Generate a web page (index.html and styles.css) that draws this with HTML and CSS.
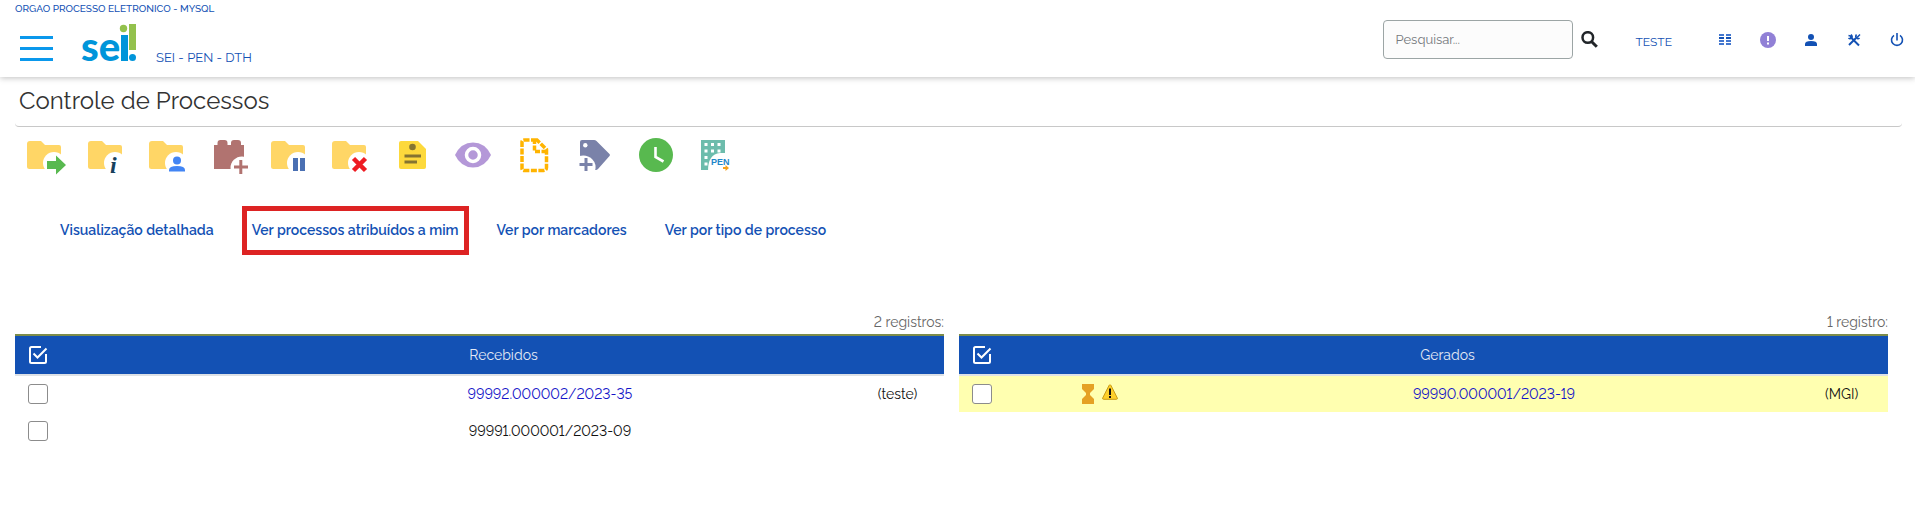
FILE: index.html
```html
<!DOCTYPE html>
<html lang="pt-BR">
<head>
<meta charset="utf-8">
<title>SEI - Controle de Processos</title>
<link rel="stylesheet" href="styles.css">
</head>
<body>
<svg class="defs" aria-hidden="true">
  <defs>
    <g id="folder">
      <path d="M4 6h11l4 4h14q2 0 2 2v20q0 2-2 2H3.500q-2.500 0-2.500-2.500V9q0-3 3-3z" fill="#ffd666"/>
      <circle cx="28" cy="28" r="11" fill="#fff"/>
      <path d="M30 34h7v5h-7z" fill="#fff"/>
    </g>
    <g id="check-all" fill="none" stroke="#fff" stroke-width="2">
      <path d="M13 2H3.500Q2 2 2 3.500v13Q2 18 3.500 18h13q1.500 0 1.500-1.500V9"/>
      <path d="M5.500 8.500l4 4L18.500 3.500"/>
    </g>
  </defs>
</svg>

<header class="topbar">
  <div class="brand">
    <div class="org">ORGAO PROCESSO ELETRONICO - MYSQL</div>
    <div class="brand-row">
      <button class="icon-button menu" type="button" aria-label="Menu">
        <svg width="33" height="26" viewBox="0 0 33 26" fill="#0a98ec"><path d="M0 0h33v3H0zM0 11h33v3H0zM0 22h33v3H0z"/></svg>
      </button>
      <svg class="logo" width="56" height="38" viewBox="0 0 56 38" role="img" aria-label="sei!">
        <text class="logo-text" x="0" y="37">se</text>
        <circle cx="42.500" cy="4.500" r="3.700" fill="#93c14d"/>
        <path d="M40 11h7v26h-7z" fill="#0095da"/>
        <path d="M48 0h7v26h-7z" fill="#93c14d"/>
        <circle cx="51.500" cy="33.500" r="3.500" fill="#0095da"/>
      </svg>
      <span class="unit">SEI - PEN - DTH</span>
    </div>
  </div>
  <div class="tools">
    <form class="search">
      <input class="search-input" type="text" placeholder="Pesquisar..." aria-label="Pesquisar">
      <button class="icon-button" type="button" aria-label="Buscar">
        <svg width="17" height="17" viewBox="0 0 17 17" fill="none" stroke="#212529"><circle cx="6.800" cy="6.500" r="5.300" stroke-width="2.500"/><path d="M10.500 10.500l5.300 5.300" stroke-width="3"/></svg>
      </button>
    </form>
    <a class="user" href="#">TESTE</a>
    <nav class="actions" aria-label="Ações">
      <button class="icon-button" type="button" aria-label="Painel">
        <svg width="16" height="16" viewBox="0 0 16 16" fill="#4377cf"><path d="M2 2h5v2H2zM9 2h5v2H9zM2 8h5v2H2zM9 8h5v2H9zM2 11h5v2H2zM9 11h5v2H9z"/><path d="M2 5h5v2H2zM9 5h5v2H9z" fill="#1351b4"/></svg>
      </button>
      <button class="icon-button" type="button" aria-label="Avisos">
        <svg width="16" height="16" viewBox="0 0 16 16"><circle cx="8" cy="8" r="8" fill="#9180d6"/><path d="M7 4h2v5H7zM7 10.500h2v2H7z" fill="#fff"/></svg>
      </button>
      <button class="icon-button" type="button" aria-label="Usuário">
        <svg width="16" height="16" viewBox="0 0 16 16" fill="#1351b4"><circle cx="8" cy="5" r="3"/><path d="M2 14v-2q0-3 6-3t6 3v2z"/></svg>
      </button>
      <button class="icon-button" type="button" aria-label="Configurações">
        <svg width="16" height="16" viewBox="0 0 16 16" fill="none" stroke="#1351b4"><path d="M4.500 5l8.500 8.500" stroke-width="2"/><path d="M3 13L10 6" stroke-width="2"/><path d="M2.500 3.500l2 .500.500 2M5 2.500q2 2 .500 3.500T2.500 6" stroke-width="1.500"/><path d="M10.500 2.500q-1.500 2 0 3.500t3 0M11 5.500l3-3" stroke-width="1.500"/></svg>
      </button>
      <button class="icon-button" type="button" aria-label="Sair">
        <svg width="16" height="16" viewBox="0 0 16 16" fill="none" stroke="#1351b4" stroke-width="1.600"><path d="M8 1v7.500M5 3.300a5.500 5.500 0 1 0 6 0"/></svg>
      </button>
    </nav>
  </div>
</header>

<main class="content">
  <h1 class="title">Controle de Processos</h1>

  <div class="toolbar">
    <button class="icon-button" type="button" aria-label="Enviar processo"><svg width="40" height="40" viewBox="0 0 40 40"><use href="#folder"/><path d="M21 26h9v-5.500l10 9.500-10 9.500V34h-9z" fill="#58b94f"/></svg></button>
    <button class="icon-button" type="button" aria-label="Atualizar andamento"><svg class="info-icon" width="40" height="40" viewBox="0 0 40 40"><use href="#folder"/><text class="info-glyph" x="23" y="38">i</text></svg></button>
    <button class="icon-button" type="button" aria-label="Atribuição"><svg width="40" height="40" viewBox="0 0 40 40"><use href="#folder"/><g fill="#4285f4"><circle cx="29" cy="25.500" r="4"/><path d="M21 36.500v-1.500q0-4 8-4t8 4v1.500z"/></g></svg></button>
    <button class="icon-button" type="button" aria-label="Incluir em bloco"><svg width="40" height="40" viewBox="0 0 40 40"><path d="M5 10h3.500V8q0-3 3-3h4q3 0 3 3v2H22V8q0-3 3-3h4q3 0 3 3v2h3v24H5z" fill="#b17370"/><circle cx="33" cy="33" r="11.500" fill="#fff"/><path d="M30.300 25h3v5.500h5.700v3h-5.700v5.500h-3v-5.500H25v-3h5.300z" fill="#b17370"/></svg></button>
    <button class="icon-button" type="button" aria-label="Sobrestar"><svg width="40" height="40" viewBox="0 0 40 40"><use href="#folder"/><path d="M23 23h5v13h-5zM30 23h5v13h-5z" fill="#4a70b3"/></svg></button>
    <button class="icon-button" type="button" aria-label="Concluir"><svg width="40" height="40" viewBox="0 0 40 40"><use href="#folder"/><path d="M22.500 23.500l12 12M34.500 23.500l-12 12" stroke="#ee1c23" stroke-width="4.500"/></svg></button>
    <button class="icon-button" type="button" aria-label="Anotações"><svg width="40" height="40" viewBox="0 0 40 40"><path d="M9 6h17l8 8v18q0 2-2 2H9q-2 0-2-2V8q0-2 2-2z" fill="#fdd93c"/><g fill="#857430"><circle cx="20.500" cy="12" r="3.300"/><path d="M12.500 19.500H29v3H12.500zM12.500 25.500H25v3H12.500z"/></g></svg></button>
    <button class="icon-button" type="button" aria-label="Acompanhamento"><svg width="40" height="40" viewBox="0 0 40 40"><path d="M2 20Q8 7.500 20 7.500T38 20Q32 32.500 20 32.500T2 20z" fill="#b498d8"/><circle cx="20" cy="20" r="6.500" fill="#b498d8" stroke="#fff" stroke-width="3.500"/></svg></button>
    <button class="icon-button" type="button" aria-label="Incluir documento"><svg width="40" height="40" viewBox="0 0 40 40" fill="none" stroke="#ffb400" stroke-width="3.500"><path d="M23 5H10.500Q8 5 8 7v26.500Q8 35.500 10.500 35.500h19q3 0 3-3V14.500z" stroke-dasharray="6 1.500"/><path d="M20.500 4v12.500H33" stroke-dasharray="5 1.500"/></svg></button>
    <button class="icon-button" type="button" aria-label="Marcadores"><svg width="40" height="40" viewBox="0 0 40 40"><path d="M7 5h12q1.500 0 2.500 1l13 13q1 1 0 2L23 34q-1 1-2 1H5V7q0-2 2-2z" fill="#7a82a9"/><circle cx="10.300" cy="10.300" r="2.200" fill="#fff"/><path d="M4 21q8-2 13 3t3 12H4z" fill="#fff"/><path d="M9.500 23h3v5h5v3h-5v5h-3v-5h-5v-3h5z" fill="#7a82a9"/></svg></button>
    <button class="icon-button" type="button" aria-label="Prazos"><svg width="40" height="40" viewBox="0 0 40 40"><circle cx="20" cy="20" r="17" fill="#58b94f"/><path d="M19.500 12v10l8 4.500" fill="none" stroke="#fff" stroke-width="2.600"/></svg></button>
    <button class="icon-button" type="button" aria-label="Tramita PEN"><svg width="40" height="40" viewBox="0 0 40 40"><path d="M4 5h24v30H4z" fill="#6dbcac"/><path d="M7.500 8h3v3h-3zM14 8h3v3h-3zM20.500 8h3v3h-3zM7.500 14.500h3v3h-3zM14 14.500h3v3h-3zM20.500 14.500h3v3h-3zM7.500 21h3v3h-3zM7.500 27.500h3v3h-3z" fill="#fff"/><path d="M11 36q0-17 12-18h11v18z" fill="#fff"/><text class="pen-glyph" x="14" y="30">PEN</text><path d="M26 32h2.500v-2l3.500 3-3.500 3v-2H26z" fill="#f5a11d"/></svg></button>
  </div>

  <nav class="views" aria-label="Visualizações">
    <a class="view" href="#">Visualização detalhada</a>
    <a class="view view-marked" href="#">Ver processos atribuídos a mim</a>
    <a class="view" href="#">Ver por marcadores</a>
    <a class="view" href="#">Ver por tipo de processo</a>
  </nav>

  <div class="lists">
    <table class="list">
      <caption class="count">2 registros:</caption>
      <colgroup><col class="col-check"><col class="col-flags"><col class="col-number"><col class="col-user"></colgroup>
      <thead>
        <tr><th><button class="icon-button" type="button" aria-label="Selecionar todos"><svg width="20" height="20" viewBox="0 0 20 20"><use href="#check-all"/></svg></button></th><th colspan="3">Recebidos</th></tr>
      </thead>
      <tbody>
        <tr><td><input class="check" type="checkbox" aria-label="99992.000002/2023-35"></td><td></td><td><a class="process" href="#">99992.000002/2023-35</a></td><td>(teste)</td></tr>
        <tr><td><input class="check" type="checkbox" aria-label="99991.000001/2023-09"></td><td></td><td><a class="process process-seen" href="#">99991.000001/2023-09</a></td><td></td></tr>
      </tbody>
    </table>
    <table class="list">
      <caption class="count">1 registro:</caption>
      <colgroup><col class="col-check"><col class="col-flags"><col class="col-number"><col class="col-user"></colgroup>
      <thead>
        <tr><th><button class="icon-button" type="button" aria-label="Selecionar todos"><svg width="20" height="20" viewBox="0 0 20 20"><use href="#check-all"/></svg></button></th><th colspan="3">Gerados</th></tr>
      </thead>
      <tbody>
        <tr class="highlight"><td><input class="check" type="checkbox" aria-label="99990.000001/2023-19"></td>
          <td><div class="flags">
            <svg width="12" height="20" viewBox="0 0 12 20"><path d="M0 0h12v5L8 9v2l4 4v5H0v-5l4-4V9L0 5z" fill="#e5a124"/></svg>
            <svg width="16" height="16" viewBox="0 0 16 16"><path d="M8 .8q.6 0 1 .7l6.300 12.500q.4 1.300-.8 1.300h-13Q.3 15.300.7 14L7 1.500Q7.400.8 8 .8z" fill="#fdd02a" stroke="#c99a16"/><path d="M7 4.500h2V11H7zM7 12h2v2H7z" fill="#111"/></svg>
          </div></td>
          <td><a class="process" href="#">99990.000001/2023-19</a></td><td>(MGI)</td></tr>
      </tbody>
    </table>
  </div>
</main>
</body>
</html>
```
FILE: styles.css
```css
* {
  box-sizing: border-box;
}

body {
  margin: 0;
  background: #fff;
  color: #111;
  font-family: Raleway, Lato, sans-serif;
  font-size: 14px;
  font-variant-numeric: lining-nums;
}

a {
  color: #1351b4;
  text-decoration: none;
}

svg {
  display: block;
}

.defs {
  position: absolute;
  width: 0;
  height: 0;
}

.icon-button {
  display: block;
  padding: 0;
  border: 0;
  background: none;
  cursor: pointer;
}

.topbar {
  display: flex;
  justify-content: space-between;
  min-height: 77px;
  box-shadow: 0 1px 6px rgba(0, 0, 0, 0.25);
}

.brand {
  padding: 2px 15px 0;
}

.org {
  color: #1351b4;
  font-size: 10px;
  font-weight: 500;
  line-height: 14px;
}

.brand-row {
  display: flex;
  align-items: flex-end;
  padding: 8px 0 0 5px;
}

.logo {
  margin: 0 19px 0 28px;
  overflow: visible;
}

.logo-text {
  fill: #0095da;
  font-family: "Liberation Sans Narrow", Lato, sans-serif;
  font-size: 40px;
  font-weight: 900;
}

.unit {
  color: #1351b4;
  font-size: 13px;
  line-height: 8px;
}

.tools {
  display: flex;
  align-items: flex-start;
  padding: 20px 10px 0 0;
}

.search {
  display: flex;
  gap: 8px;
}

.search .icon-button {
  height: 38px;
}

.search-input {
  width: 190px;
  height: 39px;
  padding: 0 12px;
  border: 1px solid #9ca5a5;
  border-radius: 4px;
  background: #fcfcfc;
  font-family: inherit;
  font-size: 13px;
}

.search-input::placeholder {
  color: #75797d;
}

.user {
  margin: 14px 45px 0 38px;
  font-size: 12px;
  line-height: 16px;
}

.actions {
  display: flex;
  gap: 27px;
  padding-top: 12px;
}

.content {
  padding: 0 13px 0 15px;
}

.title {
  margin: 0;
  padding: 8px 4px 9px;
  border-bottom: 1px solid #c8c8c8;
  border-radius: 4px;
  color: #333;
  font-size: 24px;
  font-weight: 400;
  line-height: 32px;
}

.toolbar {
  display: flex;
  gap: 21px;
  padding: 8px 11px 31px;
}

.views {
  display: flex;
  gap: 18px;
  padding-left: 35px;
}

.view {
  padding: 10px 5px;
  border: 5px solid transparent;
  font-size: 14px;
  font-weight: 600;
  line-height: 19px;
}

.view-marked {
  border-color: #dd2323;
}

.lists {
  display: grid;
  grid-template-columns: 1fr 1fr;
  align-items: start;
  gap: 15px;
  padding: 56px 14px 0 0;
}

.list {
  width: 100%;
  border-collapse: collapse;
  table-layout: fixed;
  text-align: center;
}

.count {
  padding-bottom: 1px;
  color: #666;
  line-height: 22px;
  text-align: right;
}

.col-check {
  width: 48px;
}

.col-flags {
  width: 20%;
}

.col-user {
  width: 10%;
}

.list thead {
  border-top: 2px solid #7c8c4a;
  border-bottom: 2px solid #dde1e6;
}

.list th {
  height: 40px;
  padding: 0;
  background: #1351b4;
  color: #e4eaf5;
  font-weight: 400;
}

.list th .icon-button {
  margin-left: 13px;
}

.list td {
  height: 37px;
  padding: 0;
}

.highlight {
  background: #ffffb0;
}

.check {
  display: block;
  width: 20px;
  height: 20px;
  margin: 0 0 0 13px;
  border: 1px solid #8c8c8c;
  border-radius: 3px;
  background: #fff;
  appearance: none;
}

.check:checked {
  background: #1351b4;
}

.flags {
  display: flex;
  justify-content: center;
  gap: 8px;
}

.process {
  color: #1414c8;
}

.process-seen {
  color: #111;
}

.info-icon {
  overflow: visible;
}

.info-glyph {
  fill: #17405c;
  font-family: "Liberation Serif", serif;
  font-size: 24px;
  font-style: italic;
  font-weight: 700;
}

.pen-glyph {
  fill: #1f86c9;
  font-family: "Liberation Sans", sans-serif;
  font-size: 9px;
  font-weight: 700;
}
```
